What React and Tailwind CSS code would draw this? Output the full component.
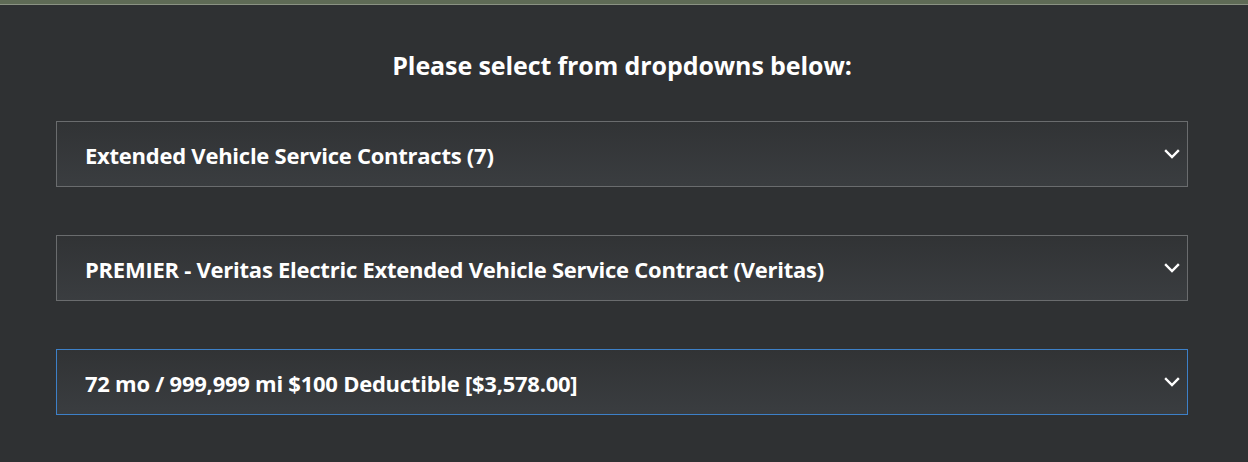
import React from "react";

function Chevron() {
  return (
    <svg width="16" height="10" viewBox="0 0 16 10" className="shrink-0">
      <path d="M2 2 L8 8 L14 2" fill="none" stroke="#ffffff" strokeWidth="2.4" strokeLinecap="square" />
    </svg>
  );
}

function Select({ label, active }) {
  return (
    <div
      className={`flex h-[66px] items-center justify-between border pl-[28px] pr-[7px] bg-gradient-to-b from-[#313335] to-[#3a3d40] ${
        active ? "border-[#3d80c8]" : "border-[#6a6c6e]"
      }`}
    >
      <span className="pt-[3px] text-[22px] font-bold text-white tracking-[-0.25px]">{label}</span>
      <Chevron />
    </div>
  );
}

export default function App() {
  return (
    <div className="w-[1248px] h-[462px] bg-[#2f3133] font-['Open_Sans',sans-serif] overflow-hidden">
      <div className="h-[4px] bg-[#5f6b56]" />
      <div className="h-[1px] bg-[#8a9283]" />
      <div className="ml-[56px] w-[1132px]">
        <h1 className="mt-[44px] h-[32px] text-center text-[25px] leading-[32px] font-bold text-white tracking-[-0.1px]">
          Please select from dropdowns below:
        </h1>
        <div className="mt-[40px] flex flex-col gap-[48px]">
          <Select label="Extended Vehicle Service Contracts (7)" />
          <Select label="PREMIER - Veritas Electric Extended Vehicle Service Contract (Veritas)" />
          <Select label="72 mo / 999,999 mi $100 Deductible [$3,578.00]" active />
        </div>
      </div>
    </div>
  );
}
